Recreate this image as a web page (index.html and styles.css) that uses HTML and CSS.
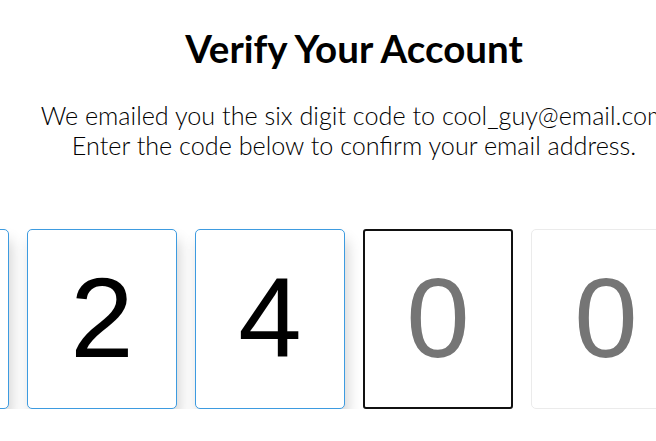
FILE: index.html
```html
<!DOCTYPE html>
<html>
<head>
<meta charset="utf-8">
<link rel="stylesheet" href="styles.css">
</head>
<body>
<main class="page">
  <h1 class="title">Verify Your Account</h1>
  <p class="lead">We emailed you the six digit code to cool_guy@email.com<br>Enter the code below to confirm your email address.</p>
  <div class="code">
    <input class="digit filled" value="7" maxlength="1">
    <input class="digit filled" value="2" maxlength="1">
    <input class="digit filled" value="4" maxlength="1">
    <input class="digit focused" placeholder="0" maxlength="1">
    <input class="digit empty" placeholder="0" maxlength="1">
    <input class="digit empty" placeholder="0" maxlength="1">
  </div>
</main>
</body>
</html>
```
FILE: styles.css
```css
html, body {
  margin: 0;
  padding: 0;
  background: #fff;
  overflow: hidden;
}
.page {
  width: 1040px;
  margin-left: -166px;
  text-align: center;
  font-family: Lato, "Open Sans", sans-serif;
  color: #000;
}
.title {
  margin: 0;
  padding-top: 26px;
  font-size: 38.5px;
  font-weight: 700;
  line-height: 44px;
}
.lead {
  margin: 30px 0 0;
  font-size: 25.2px;
  font-weight: 300;
  line-height: 30px;
}
.code {
  display: flex;
  justify-content: center;
  gap: 18px;
  margin-top: 69px;
}
.digit {
  box-sizing: border-box;
  width: 150px;
  height: 180px;
  padding: 0 0 3px;
  border-radius: 5px;
  background: #fff;
  text-align: center;
  font-family: "Liberation Sans", Arial, sans-serif;
  font-size: 114px;
  color: #000;
  outline: none;
}
.digit::placeholder {
  color: #757575;
  opacity: 1;
}
.filled {
  border: 1px solid #3d9be0;
  box-shadow: 3px 11px 14px rgba(0, 0, 0, 0.17);
}
.focused {
  border: 2px solid #111;
  border-radius: 3px;
}
.empty {
  border: 1px solid #ebebeb;
}
```
